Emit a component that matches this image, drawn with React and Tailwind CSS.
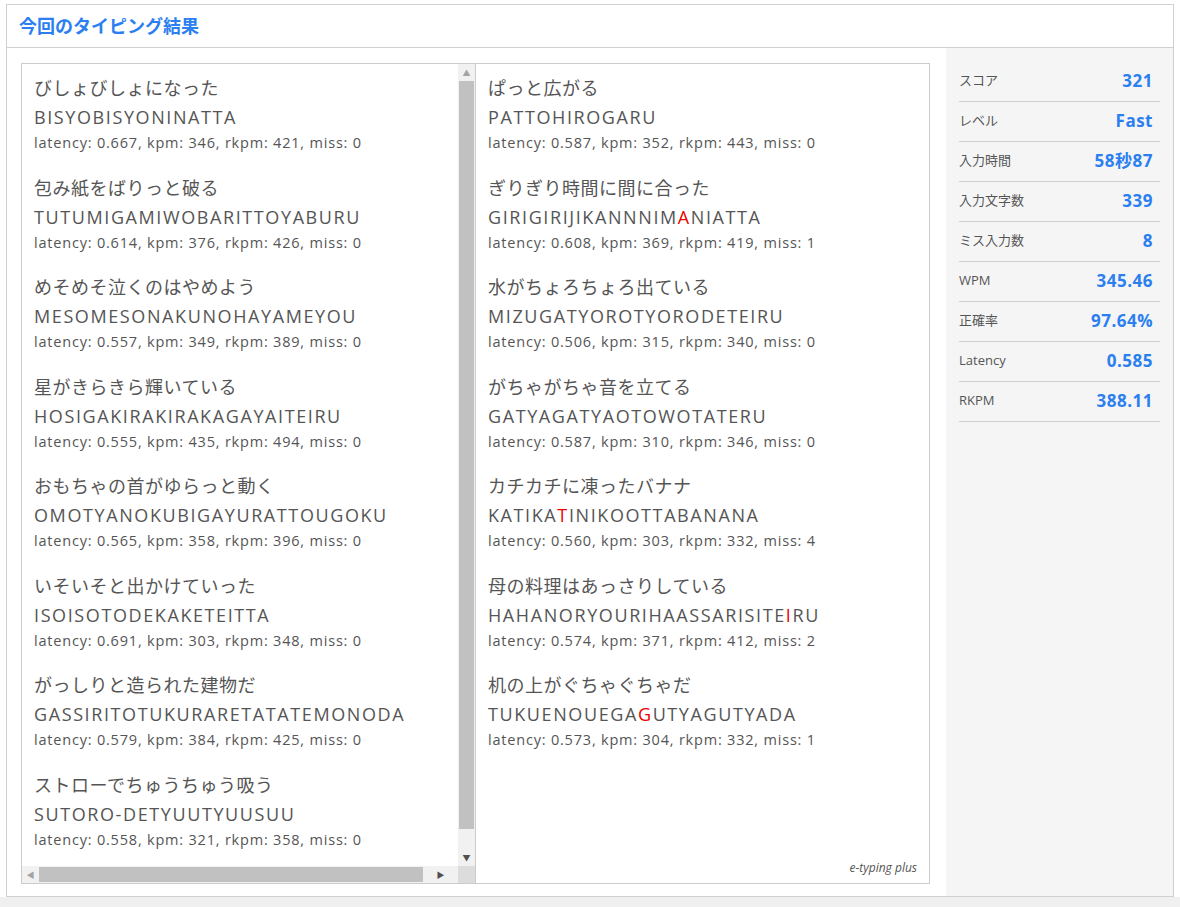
const L = [
  ["びしょびしょになった","BISYOBISYONINATTA","latency: 0.667, kpm: 346, rkpm: 421, miss: 0"],
  ["包み紙をばりっと破る","TUTUMIGAMIWOBARITTOYABURU","latency: 0.614, kpm: 376, rkpm: 426, miss: 0"],
  ["めそめそ泣くのはやめよう","MESOMESONAKUNOHAYAMEYOU","latency: 0.557, kpm: 349, rkpm: 389, miss: 0"],
  ["星がきらきら輝いている","HOSIGAKIRAKIRAKAGAYAITEIRU","latency: 0.555, kpm: 435, rkpm: 494, miss: 0"],
  ["おもちゃの首がゆらっと動く","OMOTYANOKUBIGAYURATTOUGOKU","latency: 0.565, kpm: 358, rkpm: 396, miss: 0"],
  ["いそいそと出かけていった","ISOISOTODEKAKETEITTA","latency: 0.691, kpm: 303, rkpm: 348, miss: 0"],
  ["がっしりと造られた建物だ","GASSIRITOTUKURARETATATEMONODA","latency: 0.579, kpm: 384, rkpm: 425, miss: 0"],
  ["ストローでちゅうちゅう吸う","SUTORO-DETYUUTYUUSUU","latency: 0.558, kpm: 321, rkpm: 358, miss: 0"],
];
const R = [
  ["ぱっと広がる",["PATTOHIROGARU"],"latency: 0.587, kpm: 352, rkpm: 443, miss: 0"],
  ["ぎりぎり時間に間に合った",["GIRIGIRIJIKANNNIM","A","NIATTA"],"latency: 0.608, kpm: 369, rkpm: 419, miss: 1"],
  ["水がちょろちょろ出ている",["MIZUGATYOROTYORODETEIRU"],"latency: 0.506, kpm: 315, rkpm: 340, miss: 0"],
  ["がちゃがちゃ音を立てる",["GATYAGATYAOTOWOTATERU"],"latency: 0.587, kpm: 310, rkpm: 346, miss: 0"],
  ["カチカチに凍ったバナナ",["KATIKA","T","INIKOOTTABANANA"],"latency: 0.560, kpm: 303, rkpm: 332, miss: 4"],
  ["母の料理はあっさりしている",["HAHANORYOURIHAASSARISITE","I","RU"],"latency: 0.574, kpm: 371, rkpm: 412, miss: 2"],
  ["机の上がぐちゃぐちゃだ",["TUKUENOUEGA","G","UTYAGUTYADA"],"latency: 0.573, kpm: 304, rkpm: 332, miss: 1"],
];
const S = [["スコア","321"],["レベル","Fast"],["入力時間","58秒87"],["入力文字数","339"],["ミス入力数","8"],["WPM","345.46"],["正確率","97.64%"],["Latency","0.585"],["RKPM","388.11"]];
function Entry({j,r,s}){
  return <div className="h-[99.5px] pt-[10px]">
    <div className="text-[18px] leading-[29px] tracking-[0.5px]">{j}</div>
    <div className="text-[18px] leading-[29px] tracking-[1.6px]">{Array.isArray(r)? r.map((p,i)=> <span key={i} className={i===1?"text-[#e00]":""}>{p}</span>):r}</div>
    <div className="text-[14.5px] leading-[22px] tracking-[0.8px]">{s}</div>
  </div>;
}
export default function App(){
  return <div className="w-[1180px] h-[907px] bg-white relative overflow-hidden text-[#555]" style={{fontFamily:'"Open Sans","Noto Sans CJK JP",sans-serif'}}>
    <div className="absolute left-[6px] top-[4px] w-[1168px] h-[893px] border border-[#d0d0d0] flex flex-col">
      <div className="h-[43px] border-b border-[#d0d0d0] flex items-center pl-[12px] text-[#2b7ff0] font-bold text-[18px]">今回のタイピング結果</div>
      <div className="flex flex-1">
        <div className="w-[939px] pl-[14px] pt-[15px]">
          <div className="w-[909px] h-[821px] border border-[#ccc] flex">
            <div className="w-[454px] flex border-r border-[#ccc]">
              <div className="flex flex-col w-[454px]">
                <div className="flex h-[802px]">
                  <div className="w-[436px] pl-[12px] overflow-hidden whitespace-nowrap">
                    {L.map((e,i)=><Entry key={i} j={e[0]} r={e[1]} s={e[2]}/>)}
                  </div>
                  <div className="w-[17px] bg-[#f1f1f1] flex flex-col items-center">
                    <div className="h-[17px] text-[8px] leading-[17px] text-[#a3a3a3]">▲</div>
                    <div className="w-[15px] h-[748px] bg-[#c1c1c1]"></div>
                    <div className="flex-1"></div>
                    <div className="h-[17px] text-[8px] leading-[17px] text-[#505050]">▼</div>
                  </div>
                </div>
                <div className="flex h-[17px] bg-[#f1f1f1] items-center">
                  <div className="w-[17px] text-[8px] text-center text-[#a3a3a3]">◀</div>
                  <div className="w-[384px] h-[15px] bg-[#c1c1c1]"></div>
                  <div className="flex-1 text-[8px] text-center text-[#505050]">▶</div>
                  <div className="w-[17px] h-full bg-[#dcdcdc]"></div>
                </div>
              </div>
            </div>
            <div className="flex-1 pl-[12px] relative">
              {R.map((e,i)=><Entry key={i} j={e[0]} r={e[1]} s={e[2]}/>)}
              <div className="absolute right-[12px] bottom-[6px] italic text-[12px]">e-typing plus</div>
            </div>
          </div>
        </div>
        <div className="flex-1 bg-[#f5f5f5] pl-[13px] pr-[13px] pt-[14px]">
          {S.map(([a,b])=> <div key={a} className="h-[40px] border-b border-[#d0d0d0] flex items-center justify-between pr-[7px] pb-[2px]">
            <span className="text-[13px]">{a}</span>
            <span className="text-[17px] font-bold text-[#2b7ff0] tracking-[0.5px]">{b}</span>
          </div>)}
        </div>
      </div>
    </div>
    <div className="absolute left-0 top-[897px] w-full h-[10px] bg-[#f0f0f0]"></div>
  </div>;
}
